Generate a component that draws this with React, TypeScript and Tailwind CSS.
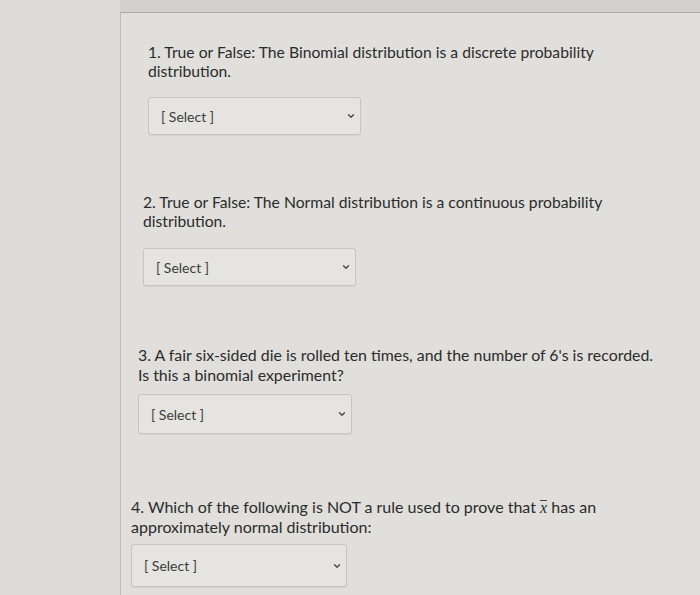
import { ChevronDown } from 'lucide-react'

type Q = {
  text: React.ReactNode
  pl: string
  mt: string
  size: string
  lead: string
  selectW: string
  selectH: string
  gap: string
}

function SelectBox({ w, h }: { w: string; h: string }) {
  return (
    <div
      className={`flex items-center justify-between rounded-[3px] border border-[#c6c5c1] bg-[#e5e4e0] pl-3 pr-[4px] shadow-[0_1px_1px_rgba(0,0,0,0.06)] ${w} ${h}`}
    >
      <span className="text-[14px] text-[#3c3c3c]">[ Select ]</span>
      <ChevronDown className="h-[10px] w-[10px] text-[#444]" strokeWidth={3} />
    </div>
  )
}

const questions: Q[] = [
  {
    text: (
      <>
        1. True or False: The Binomial distribution is a discrete probability
        <br />
        distribution.
      </>
    ),
    pl: 'pl-[27px]',
    mt: 'mt-[30px]',
    size: 'text-[15.7px]',
    lead: 'leading-[19px]',
    selectW: 'w-[213px]',
    selectH: 'h-[38px]',
    gap: 'mt-[16px]',
  },
  {
    text: (
      <>
        2. True or False: The Normal distribution is a continuous probability
        <br />
        distribution.
      </>
    ),
    pl: 'pl-[22px]',
    mt: 'mt-[58px]',
    size: 'text-[15.7px]',
    lead: 'leading-[19px]',
    selectW: 'w-[213px]',
    selectH: 'h-[38px]',
    gap: 'mt-[17px]',
  },
  {
    text: (
      <>
        3. A fair six-sided die is rolled ten times, and the number of 6's is recorded.
        <br />
        Is this a binomial experiment?
      </>
    ),
    pl: 'pl-[17px]',
    mt: 'mt-[59px]',
    size: 'text-[15.9px]',
    lead: 'leading-[20px]',
    selectW: 'w-[214px]',
    selectH: 'h-[40px]',
    gap: 'mt-[9px]',
  },
  {
    text: (
      <>
        4. Which of the following is NOT a rule used to prove that{' '}
        <span className="inline-block border-t border-[#444] font-['Liberation_Serif',serif] leading-[0.85] italic">
          x
        </span>{' '}
        has an
        <br />
        approximately normal distribution:
      </>
    ),
    pl: 'pl-[10px]',
    mt: 'mt-[63px]',
    size: 'text-[16px]',
    lead: 'leading-[20px]',
    selectW: 'w-[216px]',
    selectH: 'h-[43px]',
    gap: 'mt-[7px]',
  },
]

export default function App() {
  return (
    <div className="flex h-[595px] w-[700px] overflow-hidden bg-[#dcdbd7] font-['Lato','Noto_Sans',sans-serif] text-[#2b2b2b]">
      <div className="w-[120px] shrink-0 bg-[#dddbd7]" />
      <div className="flex flex-1 flex-col">
        <div className="h-[13px] shrink-0 border-b border-[#a9a8a5] bg-[#d3d1ce]" />
        <div className="flex-1 border-l border-[#bdbcb8] bg-[#e0dfdb]">
          {questions.map((q, i) => (
            <div key={i} className={`${q.pl} ${q.mt}`}>
              <p className={`whitespace-nowrap ${q.lead} ${q.size}`}>{q.text}</p>
              <div className={q.gap}>
                <SelectBox w={q.selectW} h={q.selectH} />
              </div>
            </div>
          ))}
        </div>
      </div>
    </div>
  )
}
